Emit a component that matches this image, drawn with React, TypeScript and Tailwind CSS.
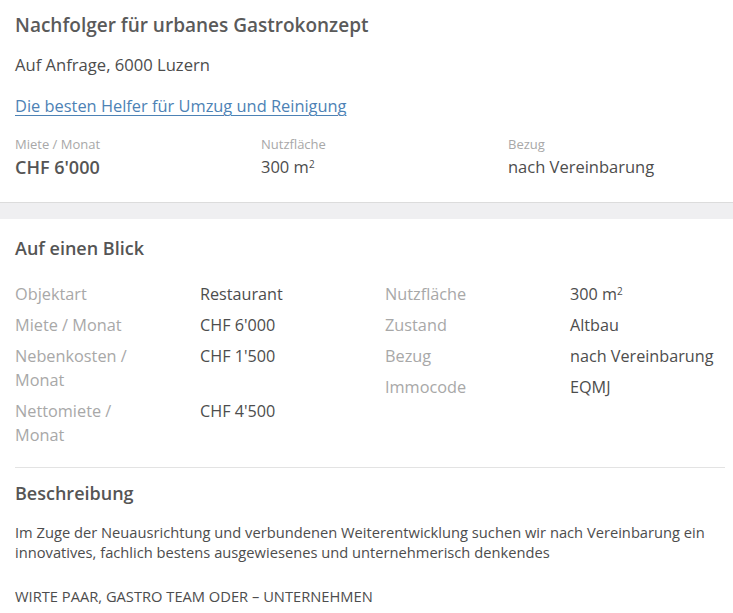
import React from "react";

const font = { fontFamily: '"Open Sans", "Noto Sans", sans-serif' };

function Row({ label, value }: { label: string; value: React.ReactNode }) {
  return (
    <>
      <div className="text-[#a8a8a8] text-[16.3px] leading-[24px] pr-[42px]">{label}</div>
      <div className="text-[#4d4d4d] text-[16.2px] leading-[24px]">{value}</div>
    </>
  );
}

export default function App() {
  return (
    <div className="w-[733px] h-[613px] overflow-hidden bg-white" style={font}>
      <div className="px-[15px] pt-[11px]">
        <h1 className="text-[19px] leading-[28px] text-[#5a5a5a] font-semibold">
          Nachfolger für urbanes Gastrokonzept
        </h1>
        <p className="mt-[14px] text-[16.6px] leading-[24px] text-[#4d4d4d]">Auf Anfrage, 6000 Luzern</p>
        <a href="#" className="block mt-[17px] text-[16.4px] leading-[24px] text-[#4d82b5] underline underline-offset-[3px] decoration-1">
          Die besten Helfer für Umzug und Reinigung
        </a>
        <div className="mt-[17px] grid grid-cols-[246px_247px_1fr] pb-[23px]">
          <div>
            <div className="text-[13px] leading-[18px] text-[#a8a8a8]">Miete / Monat</div>
            <div className="mt-[2px] text-[18px] leading-[24px] text-[#555] font-semibold">CHF 6'000</div>
          </div>
          <div>
            <div className="text-[13px] leading-[18px] text-[#a8a8a8]">Nutzfläche</div>
            <div className="mt-[2px] text-[16.5px] leading-[24px] text-[#4d4d4d]">
              300 m<sup className="text-[10px]">2</sup>
            </div>
          </div>
          <div>
            <div className="text-[13px] leading-[18px] text-[#a8a8a8]">Bezug</div>
            <div className="mt-[2px] text-[16.5px] leading-[24px] text-[#4d4d4d]">nach Vereinbarung</div>
          </div>
        </div>
      </div>
      <div className="h-[17px] bg-[#efeff1] border-t border-[#dcdcdc]" />
      <div className="px-[15px] pt-[16px]">
        <h2 className="text-[18px] leading-[26px] text-[#555] font-semibold">Auf einen Blick</h2>
        <div className="mt-[21px] grid grid-cols-[370px_1fr]">
          <div className="grid grid-cols-[185px_1fr] gap-y-[7px] content-start">
            <Row label="Objektart" value="Restaurant" />
            <Row label="Miete / Monat" value="CHF 6'000" />
            <Row label="Nebenkosten / Monat" value="CHF 1'500" />
            <Row label="Nettomiete / Monat" value="CHF 4'500" />
          </div>
          <div className="grid grid-cols-[185px_1fr] gap-y-[7px] content-start">
            <Row label="Nutzfläche" value={<>300 m<sup className="text-[10px]">2</sup></>} />
            <Row label="Zustand" value="Altbau" />
            <Row label="Bezug" value="nach Vereinbarung" />
            <Row label="Immocode" value="EQMJ" />
          </div>
        </div>
        <div className="mt-[20px] border-t border-[#e3e3e3] w-[710px]" />
        <h2 className="mt-[12px] text-[18px] leading-[26px] text-[#555] font-semibold">Beschreibung</h2>
        <p className="mt-[16px] text-[14.7px] leading-[20px] text-[#4d4d4d]">
          Im Zuge der Neuausrichtung und verbundenen Weiterentwicklung suchen wir nach Vereinbarung ein innovatives, fachlich bestens ausgewiesenes und unternehmerisch denkendes
        </p>
        <p className="mt-[24px] text-[14.7px] leading-[20px] text-[#4d4d4d]">WIRTE PAAR, GASTRO TEAM ODER – UNTERNEHMEN</p>
      </div>
    </div>
  );
}
